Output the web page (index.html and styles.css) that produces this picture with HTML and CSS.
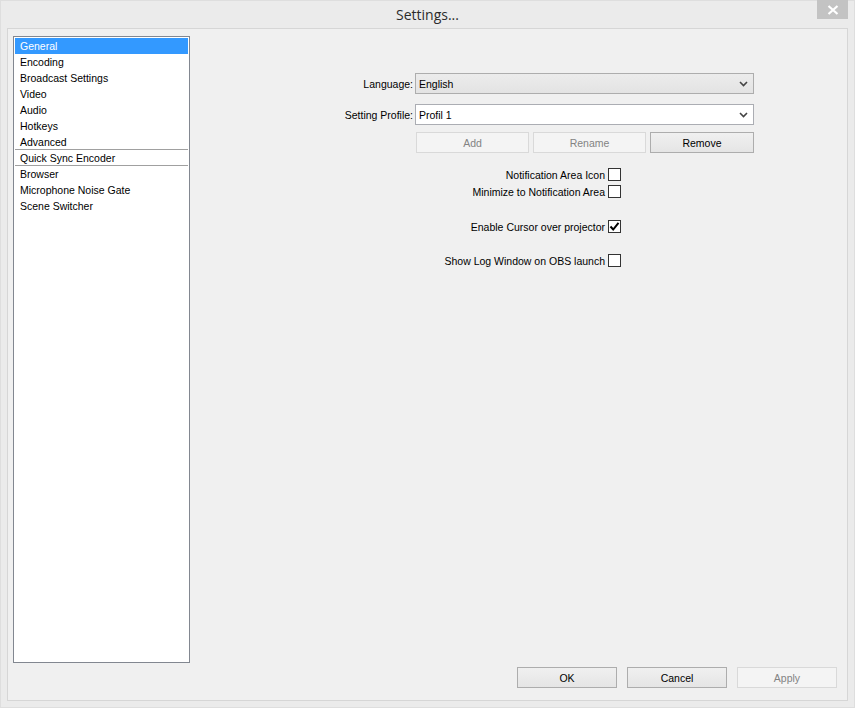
FILE: index.html
```html
<!DOCTYPE html>
<html>
<head>
<meta charset="utf-8">
<title>Settings...</title>
<link rel="stylesheet" href="styles.css">
</head>
<body>
<div class="window">
  <div class="titlebar">
    <div></div>
    <div class="title">Settings...</div>
    <div class="close-wrap">
      <div class="close">
        <svg width="12" height="10" viewBox="0 0 12 10"><path d="M1.5 1 L10.5 9 M10.5 1 L1.5 9" stroke="#fff" stroke-width="2.2" fill="none"/></svg>
      </div>
    </div>
  </div>
  <div class="client">
    <div class="main">
      <ul class="list">
        <li class="item selected">General</li>
        <li class="item">Encoding</li>
        <li class="item">Broadcast Settings</li>
        <li class="item">Video</li>
        <li class="item">Audio</li>
        <li class="item">Hotkeys</li>
        <li class="item sep">Advanced</li>
        <li class="item sep">Quick Sync Encoder</li>
        <li class="item">Browser</li>
        <li class="item">Microphone Noise Gate</li>
        <li class="item">Scene Switcher</li>
      </ul>
      <div class="pane">
        <div class="form">
          <label class="lbl">Language:</label>
          <div class="combo combo-ro">
            <span>English</span>
            <svg class="arrow" width="9" height="6" viewBox="0 0 9 6"><path d="M1 1 L4.5 4.5 L8 1" stroke="#444" stroke-width="1.6" fill="none"/></svg>
          </div>
          <label class="lbl lbl2">Setting Profile:</label>
          <div class="combo combo-ed combo2">
            <span>Profil 1</span>
            <svg class="arrow" width="9" height="6" viewBox="0 0 9 6"><path d="M1 1 L4.5 4.5 L8 1" stroke="#444" stroke-width="1.6" fill="none"/></svg>
          </div>
          <div></div>
          <div class="btnrow">
            <button class="btn disabled w113">Add</button>
            <button class="btn disabled w113">Rename</button>
            <button class="btn w104">Remove</button>
          </div>
        </div>
        <div class="checks">
          <div class="chk">Notification Area Icon <span class="box"></span></div>
          <div class="chk">Minimize to Notification Area <span class="box"></span></div>
          <div class="chk gap1">Enable Cursor over projector <span class="box"><svg width="11" height="11" viewBox="0 0 11 11"><path d="M1.5 5.5 L4.2 8.5 L9.5 1.8" stroke="#000" stroke-width="2" fill="none"/></svg></span></div>
          <div class="chk gap2">Show Log Window on OBS launch <span class="box"></span></div>
        </div>
      </div>
    </div>
    <div class="footer">
      <button class="btn fbtn">OK</button>
      <button class="btn fbtn">Cancel</button>
      <button class="btn fbtn disabled">Apply</button>
    </div>
  </div>
</div>
</body>
</html>
```
FILE: styles.css
```css
html, body {
  margin: 0;
  padding: 0;
}
body {
  width: 855px;
  height: 708px;
  overflow: hidden;
  font-family: "Liberation Sans", Arial, sans-serif;
  font-size: 10.5px;
  color: #000;
}
.window {
  box-sizing: border-box;
  width: 855px;
  height: 708px;
  background: #ebebeb;
  border: 1px solid #dedede;
  display: flex;
  flex-direction: column;
}
.titlebar {
  height: 27px;
  display: grid;
  grid-template-columns: 1fr auto 1fr;
  align-items: start;
}
.title {
  font-family: "Open Sans", "Noto Sans", sans-serif;
  font-size: 14px;
  color: #2b2b2b;
  line-height: 27px;
}
.close-wrap {
  display: flex;
  justify-content: flex-end;
  padding-right: 6px;
}
.close {
  width: 31px;
  height: 19px;
  margin-top: -1px;
  background: #c3c3c3;
  display: flex;
  align-items: center;
  justify-content: center;
}
.client {
  box-sizing: border-box;
  margin: 0 6px 6px 6px;
  flex: 1;
  border: 1px solid #d6d6d6;
  background: #f0f0f0;
  display: flex;
  flex-direction: column;
  padding: 7px 10px 12px 5px;
}
.main {
  height: 627px;
  display: flex;
}
.list {
  box-sizing: border-box;
  width: 177px;
  height: 627px;
  margin: 0;
  padding: 1px;
  list-style: none;
  background: #fff;
  border: 1px solid #828790;
}
.item {
  height: 16px;
  line-height: 16px;
  padding-left: 5px;
  white-space: nowrap;
}
.item.selected {
  background: #3399ff;
  color: #fff;
}
.item.sep {
  border-bottom: 1px solid #a0a0a0;
  height: 15px;
}
.pane {
  flex: 1;
  padding-top: 37px;
  padding-left: 23px;
}
.form {
  display: grid;
  grid-template-columns: 200px 339px;
  column-gap: 2px;
  align-items: center;
}
.lbl {
  text-align: right;
  white-space: nowrap;
}
.combo {
  box-sizing: border-box;
  height: 21px;
  display: flex;
  align-items: center;
  justify-content: space-between;
  padding: 0 5px 0 3px;
}
.combo-ro {
  background: linear-gradient(#ececec, #e3e3e3);
  border: 1px solid #adadad;
}
.combo-ed {
  background: #fff;
  border: 1px solid #abadb3;
}
.combo2,
.lbl2 {
  margin-top: 10px;
}
.btnrow {
  display: flex;
  gap: 4px;
  margin-top: 7px;
  padding-left: 1px;
}
.btn {
  box-sizing: border-box;
  height: 21px;
  font-family: "Liberation Sans", Arial, sans-serif;
  font-size: 10.5px;
  color: #000;
  background: linear-gradient(#f0f0f0, #e5e5e5);
  border: 1px solid #adadad;
  padding: 0;
  margin: 0;
}
.btn.disabled {
  background: #f4f4f4;
  border-color: #d9d9d9;
  color: #838383;
}
.w113 { width: 113px; }
.w104 { width: 104px; }
.checks {
  width: 408px;
  display: flex;
  flex-direction: column;
  align-items: flex-end;
  margin-top: 13px;
}
.chk {
  height: 17px;
  display: flex;
  align-items: center;
  gap: 3px;
  white-space: nowrap;
}
.gap1 { margin-top: 18px; }
.gap2 { margin-top: 17px; }
.box {
  box-sizing: border-box;
  width: 13px;
  height: 13px;
  border: 1px solid #333;
  background: #fff;
  display: inline-flex;
  align-items: center;
  justify-content: center;
}
.footer {
  margin-top: 4px;
  display: flex;
  justify-content: flex-end;
  gap: 10px;
}
.fbtn {
  width: 100px;
}
```
